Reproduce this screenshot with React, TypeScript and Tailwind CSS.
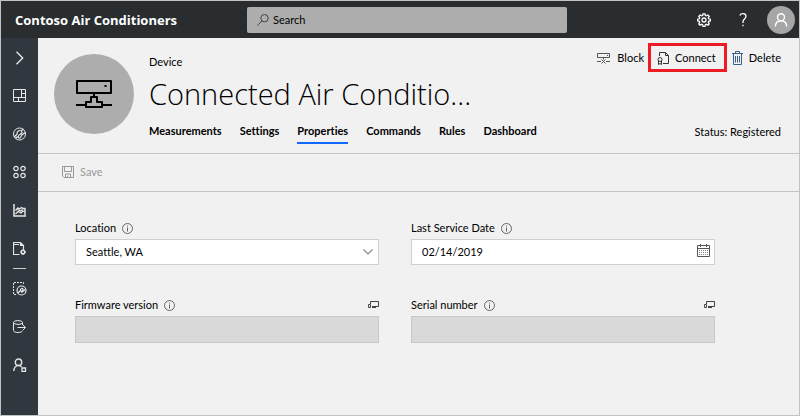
import { useState } from "react";
import type { ReactNode, SVGProps } from "react";

function Icon({ children, ...props }: SVGProps<SVGSVGElement>) {
  return (
    <svg fill="none" stroke="currentColor" aria-hidden="true" className="shrink-0" {...props}>
      {children}
    </svg>
  );
}

const small = { width: 14, height: 14, viewBox: "0 0 14 14" };

function ChevronIcon() {
  return (
    <Icon {...small} strokeWidth="1.4">
      <path d="M3.500 .8 9.700 7 3.500 13.200" />
    </Icon>
  );
}

function DashboardIcon() {
  return (
    <Icon {...small}>
      <path d="M.5.5h12v12H.5zM8.5.5v8M.5 8.5h12M8.5 4.5h4M5.5 8.5v4" />
    </Icon>
  );
}

function ExplorerIcon() {
  return (
    <Icon {...small}>
      <circle cx="6.500" cy="7" r="6" />
      <path d="M1.200 10 4 7.200C3.800 5 5 3.500 7 3.500s2.500 2 1.500 3S5.500 7.500 5.300 9.500s1.700 2 2.400.8c.6-1 .6-2 1.800-2.800l2.800-2M2.500 11.500l2-2M8.500 3.500l2-1.500" strokeWidth="1.200" />
    </Icon>
  );
}

function DeviceSetsIcon() {
  return (
    <Icon {...small} strokeWidth="1.200">
      <circle cx="3" cy="3.500" r="2.200" />
      <circle cx="10" cy="3.500" r="2.200" />
      <circle cx="3" cy="10.500" r="2.200" />
      <circle cx="10" cy="10.500" r="2.200" />
    </Icon>
  );
}

function AnalyticsIcon() {
  return (
    <Icon {...small}>
      <path d="M1 1v12h12" strokeWidth="1.500" />
      <path d="M2.500 7.500 5 5l1.500 1 2-1.500 1.500 1h2v7" strokeWidth="1.400" />
      <path d="M2.500 11 5 8.500l3 1.500L10 8l2 .5M4.500 6.500l3 1.500 2-1.500" strokeWidth="1.200" />
    </Icon>
  );
}

function JobsIcon() {
  return (
    <Icon {...small}>
      <path d="M6.500 13.500h-6v-12h7l3 3v4M7.500 1.500v3h3M1 3.500h5" strokeWidth="1.200" />
      <circle cx="10" cy="11" r="1.800" strokeWidth="1.500" />
      <path d="M10 8.200v1M10 12.800v1.200M7.300 11h1M11.700 11H13" />
    </Icon>
  );
}

function TemplatesIcon() {
  return (
    <Icon {...small}>
      <path d="M3 12.500H.5V.5h10v2" strokeDasharray="2 1" />
      <circle cx="8.500" cy="8.500" r="4.500" strokeWidth="1.200" />
      <path d="M5 11 7.500 8.500c-.5-1.500 1.500-3 2.500-1.500.5 1.500-2 1.500-1.500 3 .8.800 1.500-1.200 3.800-2.500" strokeWidth="1.200" />
    </Icon>
  );
}

function ExportIcon() {
  return (
    <Icon {...small}>
      <ellipse cx="5" cy="2.500" rx="4.500" ry="1.900" />
      <path d="M.5 2.500v8c0 1.200 2 2 4.500 2s4.500-.8 4.500-2M9.500 2.500v2.500M4.500 7.500h8M10 5l2.500 2.500L10 10" />
    </Icon>
  );
}

function AdminIcon() {
  return (
    <Icon {...small}>
      <circle cx="5.500" cy="4.200" r="3.200" strokeWidth="1.400" />
      <path d="M.8 13c0-3.200 1.700-5.400 4.700-5.400 1.500 0 2.500.5 3.200 1.400" strokeWidth="1.400" />
      <path d="M9 10h3.500v3.500H9z" strokeWidth="1.300" />
    </Icon>
  );
}

function DeviceGlyph() {
  return (
    <Icon width="36" height="28" viewBox="0 0 36 28" strokeWidth="2" className="text-black">
      <path d="M1 1h34v12H1zM18 14v3M15 17h6v5h5v5H10v-5h5zM0 25h10M26 25h10" strokeLinejoin="round" />
      <path d="M29.500 5v2" />
    </Icon>
  );
}

function BlockIcon() {
  return (
    <Icon {...small} className="shrink-0 text-[#555]">
      <path d="M.5 2.500h12v4H.5zM6.500 6.500v2M0 10.500h4M9 10.500h4M4.500 8.500l4 4M8.500 8.500l-4 4M10 4.500h1" />
    </Icon>
  );
}

function ConnectIcon() {
  return (
    <Icon {...small} className="shrink-0 text-[#333]">
      <path d="M2.500 5V1.500h6l3 3v8H6M8.500 1.500v3h3" />
      <circle cx="3" cy="8.500" r="2" />
      <path d="M1.500 10v3.500L3 12.500l1.500 1V10" />
    </Icon>
  );
}

function TrashIcon() {
  return (
    <Icon {...small} className="shrink-0 text-[#3a5f85]">
      <path d="M2.500 3v10.500h8V3M1 2.500h11M4.500 2.500v-2h4v2M4.500 5v6.500M6.500 5v6.500M8.500 5v6.500" />
    </Icon>
  );
}

function SaveIcon() {
  return (
    <Icon width="12" height="12" viewBox="0 0 12 12">
      <path d="M.5.5h11v11H2l-1.500-1.500zM2.500.5v5h7v-5M3.500 11.500v-3.500h5v3.500M5.500 9.500v2" />
    </Icon>
  );
}

function InfoIcon() {
  return (
    <Icon width="11" height="11" viewBox="0 0 11 11" className="shrink-0 text-[#666]">
      <circle cx="5.500" cy="5.500" r="5" />
      <path d="M5.500 4.500v4M5.500 2.500v1" />
    </Icon>
  );
}

function ReportedIcon() {
  return (
    <Icon width="11" height="8" viewBox="0 0 11 8" className="shrink-0 text-[#444]">
      <path d="M2.500 3V.5h8v5H4M.5 3.500h2v3h-2zM4 6.500h4" />
    </Icon>
  );
}

function CalendarIcon() {
  return (
    <Icon width="13" height="13" viewBox="0 0 13 13" className="text-[#555]">
      <path d="M.5 1.500h12v11H.5zM.5 4.500h12M3.500 0v3M9.500 0v3" />
      <path d="M2 6.500h9M2 8.500h9M2 10.500h9" strokeDasharray="1 1" className="text-[#888]" stroke="currentColor" />
    </Icon>
  );
}

function DropDownIcon() {
  return (
    <Icon width="10" height="6" viewBox="0 0 10 6" className="text-[#888]">
      <path d="m.5.500 4.500 4.500L9.500.500" strokeWidth="1.200" />
    </Icon>
  );
}

function SearchIcon() {
  return (
    <Icon width="12" height="12" viewBox="0 0 12 12" className="shrink-0 text-[#444]">
      <circle cx="7.500" cy="4.200" r="3.700" />
      <path d="M5 7 .3 11.500" />
    </Icon>
  );
}

function GearIcon() {
  return (
    <Icon {...small} strokeWidth="1.300">
      <path d="M6 .8h2l.4 1.700 1 .4 1.500-.9 1.300 1.400-.9 1.400.4 1 1.600.4v1.800l-1.600.4-.4 1 .9 1.500-1.300 1.300-1.500-.9-1 .4L8 13.300H6l-.4-1.600-1-.4-1.500.9-1.300-1.300.9-1.500-.4-1L.7 8V6.200l1.600-.4.4-1-.9-1.400L3.100 2l1.500.9 1-.4z" />
      <circle cx="7" cy="7" r="2" />
    </Icon>
  );
}

function HelpIcon() {
  return (
    <Icon width="8" height="14" viewBox="0 0 8 14" strokeWidth="1.300">
      <path d="M.8 2.500C1.300 1.300 2.500.7 4 .7c1.800 0 3 1 3 2.600C7 6 4 6 4 8.700V10M4 11.700v1.600" />
    </Icon>
  );
}

function PersonIcon() {
  return (
    <Icon width="14" height="14" viewBox="0 0 14 14" strokeWidth="1.400">
      <circle cx="7" cy="4.300" r="3.500" />
      <path d="M1.300 13.500C1.600 10 3.800 7.800 7 7.800s5.400 2.200 5.700 5.700" />
    </Icon>
  );
}

function NavItem({ label, tall, children }: { label: string; tall?: boolean; children: ReactNode }) {
  return (
    <button
      type="button"
      aria-label={label}
      className={"flex w-full items-center justify-center " + (tall ? "h-[39px]" : "h-[38px]")}
    >
      {children}
    </button>
  );
}

function FieldLabel({ id, text, reported }: { id: string; text: string; reported?: boolean }) {
  return (
    <div className="flex h-4 items-center gap-1.5">
      <label htmlFor={id}>{text}</label>
      <InfoIcon />
      {reported && (
        <span className="ml-auto">
          <ReportedIcon />
        </span>
      )}
    </div>
  );
}

const tabs = ["Measurements", "Settings", "Properties", "Commands", "Rules", "Dashboard"];

export default function App() {
  const [active, setActive] = useState("Properties");

  return (
    <div className="flex min-h-screen flex-col border border-[#c2c4c3] bg-[#f1f1f1] font-['Lato',sans-serif] text-[11px] leading-4 text-black [font-variant-ligatures:none]">
      <header className="flex h-[37px] items-center bg-[#292d30] pr-1 pl-3.5 text-white">
        <div className="w-[232px] shrink-0 pt-px font-['Open_Sans',sans-serif] text-[13px] font-bold">
          Contoso Air Conditioners
        </div>
        <label className="flex h-[26px] w-80 items-center gap-1 rounded-xs bg-[#adadad] px-2.5 text-black">
          <SearchIcon />
          <input
            type="search"
            aria-label="Search"
            placeholder="Search"
            className="min-w-0 flex-1 bg-transparent outline-none placeholder:text-black"
          />
        </label>
        <div className="ml-auto flex items-center gap-5">
          <button type="button" aria-label="Settings" className="mr-2">
            <GearIcon />
          </button>
          <button type="button" aria-label="Help">
            <HelpIcon />
          </button>
          <button
            type="button"
            aria-label="Account"
            className="flex size-7 items-center justify-center rounded-full bg-[#a6a6a6]"
          >
            <PersonIcon />
          </button>
        </div>
      </header>

      <div className="flex flex-1">
        <nav aria-label="Main" className="w-[37px] shrink-0 bg-[#30373f] text-[#e6e6e6]">
          <NavItem label="Expand" tall>
            <ChevronIcon />
          </NavItem>
          <NavItem label="Dashboard">
            <DashboardIcon />
          </NavItem>
          <NavItem label="Device explorer">
            <ExplorerIcon />
          </NavItem>
          <NavItem label="Device sets">
            <DeviceSetsIcon />
          </NavItem>
          <NavItem label="Analytics">
            <AnalyticsIcon />
          </NavItem>
          <NavItem label="Jobs">
            <JobsIcon />
          </NavItem>
          <hr className="mx-3 my-px border-[#d0d0d0]" />
          <NavItem label="Device templates">
            <TemplatesIcon />
          </NavItem>
          <NavItem label="Continuous data export">
            <ExportIcon />
          </NavItem>
          <NavItem label="Administration">
            <AdminIcon />
          </NavItem>
        </nav>

        <main className="min-w-0 flex-1">
          <section className="flex h-[116px] border-b border-[#c4c5c4] pr-[18px] pl-4">
            <div className="mt-4 flex size-20 shrink-0 items-center justify-center rounded-full bg-[#adadad]">
              <DeviceGlyph />
            </div>
            <div className="ml-[15px] flex flex-col pt-4">
              <div>Device</div>
              <h1 className="mt-1.5 font-['Open_Sans',sans-serif] text-[29px] leading-9 font-light">
                Connected Air Conditio...
              </h1>
              <nav aria-label="Device" className="mt-[11px] flex gap-[18px] font-bold">
                {tabs.map((tab) => (
                  <button
                    key={tab}
                    type="button"
                    onClick={() => setActive(tab)}
                    className={"border-b-2 pb-[3px] " + (tab === active ? "border-[#1267ff]" : "border-transparent")}
                  >
                    {tab}
                  </button>
                ))}
              </nav>
            </div>
            <div className="ml-auto flex flex-col items-end justify-between pt-[5px] pb-[13px]">
              <div className="flex items-center gap-1">
                <button type="button" className="flex items-center gap-1.5">
                  <BlockIcon />
                  Block
                </button>
                <button
                  type="button"
                  className="flex h-[29px] items-center gap-1 border-3 border-[#ec1c24] pr-2 pl-1.5"
                >
                  <ConnectIcon />
                  Connect
                </button>
                <button type="button" className="flex items-center gap-1">
                  <TrashIcon />
                  Delete
                </button>
              </div>
              <div>Status: Registered</div>
            </div>
          </section>

          <div className="flex h-[38px] items-center border-b border-[#c4c5c4] pb-0.5 pl-6">
            <button type="button" disabled className="flex items-center gap-1.5 text-[#999]">
              <SaveIcon />
              Save
            </button>
          </div>

          <form className="grid grid-cols-2 gap-x-8 gap-y-8 pt-7 pr-[84px] pl-[37px]">
            <div className="flex flex-col gap-[3px]">
              <FieldLabel id="location" text="Location" />
              <div className="relative">
                <select
                  id="location"
                  className="block h-[26px] w-full appearance-none border border-[#cfcfcf] bg-white px-2.5"
                >
                  <option>Seattle, WA</option>
                </select>
                <span className="pointer-events-none absolute inset-y-0 right-1.5 flex items-center">
                  <DropDownIcon />
                </span>
              </div>
            </div>
            <div className="flex flex-col gap-[3px]">
              <FieldLabel id="service-date" text="Last Service Date" />
              <div className="flex h-[26px] items-center border border-[#cfcfcf] bg-white pr-1">
                <input
                  id="service-date"
                  type="text"
                  defaultValue="02/14/2019"
                  className="min-w-0 flex-1 bg-transparent px-2.5 outline-none"
                />
                <button type="button" aria-label="Choose date" className="pb-1">
                  <CalendarIcon />
                </button>
              </div>
            </div>
            <div className="flex flex-col gap-[3px]">
              <FieldLabel id="firmware" text="Firmware version" reported />
              <input id="firmware" type="text" disabled className="h-[27px] border border-[#c8c8c8] bg-[#d9d9d9] px-2.5" />
            </div>
            <div className="flex flex-col gap-[3px]">
              <FieldLabel id="serial" text="Serial number" reported />
              <input id="serial" type="text" disabled className="h-[27px] border border-[#c8c8c8] bg-[#d9d9d9] px-2.5" />
            </div>
          </form>
        </main>
      </div>
    </div>
  );
}
